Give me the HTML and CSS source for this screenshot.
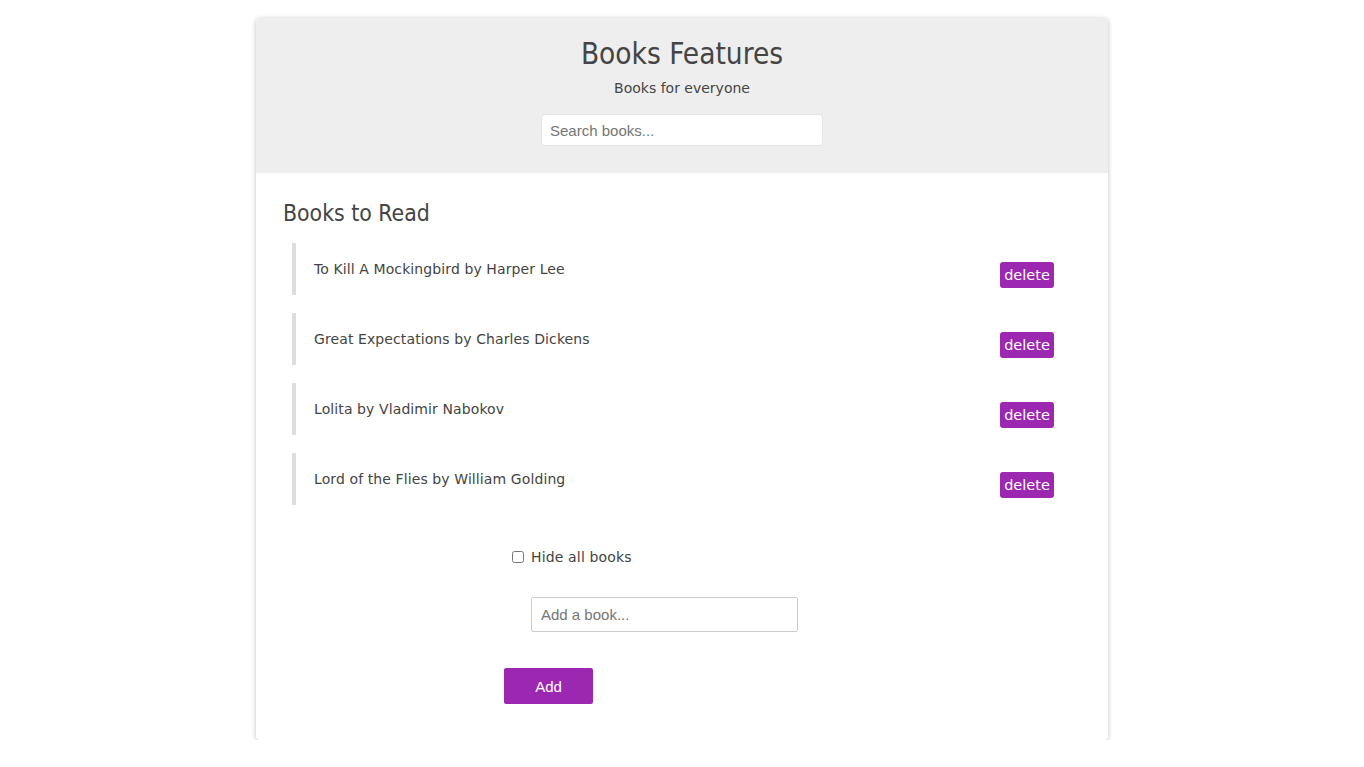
FILE: index.html
```html
<!DOCTYPE html>
<html lang="en">
<head>
<meta charset="utf-8">
<title>Books Features</title>
<link rel="stylesheet" href="styles.css">
</head>
<body>
<div class="card">
  <header class="header">
    <h1 class="title">Books Features</h1>
    <p class="subtitle">Books for everyone</p>
    <input class="search" type="text" placeholder="Search books...">
  </header>
  <main class="content">
    <h2 class="list-title">Books to Read</h2>
    <ul class="book-list">
      <li class="book"><span class="book-name">To Kill A Mockingbird by Harper Lee</span><span class="delete">delete</span></li>
      <li class="book"><span class="book-name">Great Expectations by Charles Dickens</span><span class="delete">delete</span></li>
      <li class="book"><span class="book-name">Lolita by Vladimir Nabokov</span><span class="delete">delete</span></li>
      <li class="book"><span class="book-name">Lord of the Flies by William Golding</span><span class="delete">delete</span></li>
    </ul>
    <label class="hide-row"><input class="hide-box" type="checkbox"><span>Hide all books</span></label>
    <input class="add-input" type="text" placeholder="Add a book...">
    <button class="add-btn">Add</button>
  </main>
</div>
</body>
</html>
```

FILE: styles.css
```css
html, body {
  margin: 0;
  padding: 0;
  background: #fff;
}
body {
  font-family: "DejaVu Sans", Verdana, sans-serif;
  color: #444;
}
.card {
  width: 852px;
  margin: 18px auto 0;
  background: #fff;
  border-radius: 4px;
  box-shadow: 0 1px 5px rgba(0,0,0,0.25);
  overflow: hidden;
}
.header {
  background: #eee;
  height: 155px;
  box-sizing: border-box;
  padding-top: 18px;
  display: flex;
  flex-direction: column;
  align-items: center;
}
.title {
  margin: 0;
  font-size: 29.5px;
  line-height: 36px;
  font-weight: normal;
  color: #444;
  font-family: "DejaVu Sans Condensed", "DejaVu Sans", sans-serif;
}
.subtitle {
  margin: 6px 0 0;
  font-size: 14px;
  line-height: 20px;
  letter-spacing: 0;
  color: #444;
}
.search {
  margin-top: 16px;
  width: 282px;
  height: 32px;
  box-sizing: border-box;
  border: 1px solid #e3e3e3;
  border-radius: 4px;
  padding: 0 8px;
  font-family: "Liberation Sans", Arial, sans-serif;
  font-size: 15px;
  color: #555;
  outline: none;
}
.search::placeholder, .add-input::placeholder {
  color: #757575;
}
.content {
  padding: 26px 54px 36px 27px;
  display: flex;
  flex-direction: column;
  align-items: flex-start;
}
.list-title {
  margin: 0;
  font-size: 22.8px;
  line-height: 28px;
  font-weight: normal;
  color: #444;
  font-family: "DejaVu Sans Condensed", "DejaVu Sans", sans-serif;
}
.book-list {
  list-style: none;
  margin: 16px 0 0 9px;
  padding: 0;
  align-self: stretch;
  display: flex;
  flex-direction: column;
  gap: 18px;
}
.book {
  height: 52px;
  border-left: 4px solid #ddd;
  padding-left: 18px;
  display: flex;
  align-items: center;
  justify-content: space-between;
}
.book-name {
  font-size: 14px;
  letter-spacing: 0.1px;
  color: #444;
}
.delete {
  margin-top: 12px;
  width: 54px;
  height: 26px;
  box-sizing: border-box;
  background: #9c27b0;
  color: #fff;
  border-radius: 3px;
  font-size: 14.5px;
  line-height: 26px;
  text-align: center;
}
.hide-row {
  margin: 42px 0 0 229px;
  display: flex;
  align-items: center;
  font-size: 14px;
  letter-spacing: 0.15px;
  line-height: 20px;
  color: #444;
}
.hide-box {
  margin: 0 7px 0 0;
  width: 12px;
  height: 12px;
}
.add-input {
  margin: 30px 0 0 248px;
  width: 267px;
  height: 35px;
  box-sizing: border-box;
  border: 1px solid #ccc;
  border-radius: 2px;
  padding: 0 9px;
  font-family: "Liberation Sans", Arial, sans-serif;
  font-size: 15px;
  outline: none;
}
.add-btn {
  margin: 36px 0 0 221px;
  width: 89px;
  height: 36px;
  border: none;
  border-radius: 2px;
  background: #9c27b0;
  color: #fff;
  font-family: "Liberation Sans", Arial, sans-serif;
  font-size: 15px;
  padding: 0;
}
```
